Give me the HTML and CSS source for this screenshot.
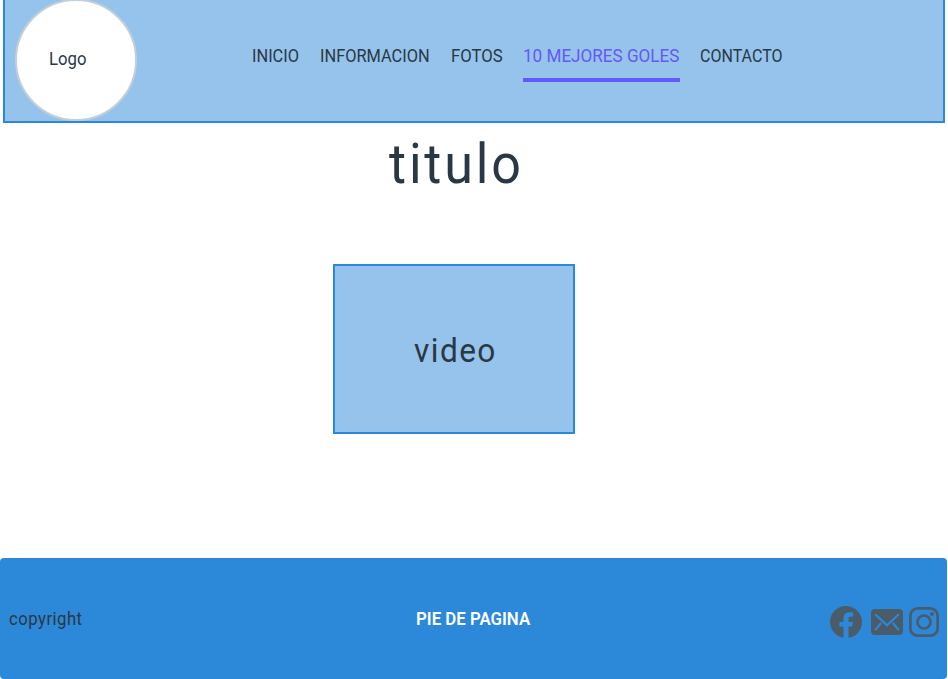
FILE: index.html
```html
<!DOCTYPE html>
<html lang="es">
<head>
<meta charset="utf-8">
<title>10 mejores goles</title>
<link rel="stylesheet" href="styles.css">
</head>
<body>
<header class="header">
  <div class="logo"><span>Logo</span></div>
  <nav class="nav">
    <a class="inicio"><span>INICIO</span></a>
    <a class="informacion"><span>INFORMACION</span></a>
    <a class="fotos"><span>FOTOS</span></a>
    <a class="goles active"><span>10 MEJORES GOLES</span></a>
    <a class="contacto"><span>CONTACTO</span></a>
  </nav>
</header>
<main class="main">
  <h1 class="title">titulo</h1>
  <div class="video"><span>video</span></div>
</main>
<footer class="footer">
  <span class="copyright">copyright</span>
  <strong class="pie">PIE DE PAGINA</strong>
  <div class="social">
    <svg class="facebook" width="32" height="32" viewBox="0 0 32 32"><path fill="currentColor" d="M32 16A16 16 0 1 0 13.5 31.8V20.6H9.4V16h4.1v-3.5c0-4 2.4-6.2 6-6.2 1.800 0 3.600.3 3.600.3v3.900h-2c-2 0-2.600 1.200-2.600 2.500v3h4.400l-.7 4.600h-3.700v11.200A16 16 0 0 0 32 16z"/></svg>
    <svg class="mail" width="32" height="26" viewBox="0 0 32 26"><rect width="32" height="26" rx="4" fill="currentColor"/><path class="mail-lines" d="M4.700 5.700 16 16.300 27.300 5.700M9.700 14.500 4.700 20.500M22.300 14.500l5 6"/></svg>
    <svg class="instagram" width="30" height="30" viewBox="0 0 30 30"><g fill="none" stroke="currentColor" stroke-width="2.700"><rect x="1.350" y="1.350" width="27.300" height="27.300" rx="7.300"/><circle cx="15" cy="15" r="6.500"/></g><circle cx="23" cy="7" r="2" fill="currentColor"/></svg>
  </div>
</footer>
</body>
</html>
```
FILE: styles.css
```css
* { box-sizing: border-box; }
body {
  margin: 0;
  height: 679px;
  display: flex;
  flex-direction: column;
  overflow: hidden;
  background: #fff;
  color: #293845;
  font: 18px/22px Roboto, "Liberation Sans", sans-serif;
}
.header {
  display: flex;
  height: 123px;
  margin: 0 3px;
  padding-left: 10px;
  background: #96c3eb;
  border: 2px solid #2c88d9;
  border-top: 0;
}
.logo {
  width: 122px;
  height: 122px;
  margin-top: -1px;
  padding: 47px 0 0 32px;
  border: 2px solid #c3cfd9;
  border-radius: 50%;
  background: #fff;
}
/* Condensed lettering */
.logo span, .nav span, .copyright, .pie {
  display: inline-block;
  justify-self: start;
  white-space: nowrap;
  transform-origin: 0 0;
}
.logo span { transform: scaleX(.93); }
.nav {
  display: flex;
  gap: 20px;
  margin: 45px 0 0 115px;
}
.nav a { height: 37px; }
.inicio { width: 48px; }
.informacion { width: 111px; }
.fotos { width: 52px; }
.goles { width: 157px; }
.contacto { width: 84px; }
.inicio span { transform: scaleX(.91); }
.informacion span { transform: scaleX(.91); }
.fotos span { transform: scaleX(.93); }
.goles span { transform: scaleX(.95); }
.contacto span { transform: scaleX(.89); }
.active { color: #6558f5; border-bottom: 4px solid #6558f5; }
.main {
  display: flex;
  flex-direction: column;
  align-items: center;
  width: 908px;
  height: 435px;
}
.title {
  margin: 8px 0 0;
  font-size: 56px;
  font-weight: 400;
  line-height: 66px;
  letter-spacing: 3px;
  transform: translateX(2px) scaleX(.93);
}
.video {
  display: flex;
  align-items: center;
  justify-content: center;
  width: 242px;
  height: 170px;
  margin-top: 67px;
  padding-top: 2px;
  background: #96c3eb;
  border: 2px solid #2c88d9;
  font-size: 34px;
  letter-spacing: 1.5px;
}
.video span { transform: translateX(1px) scaleX(.93); }
.footer {
  display: grid;
  grid-template-columns: 407px 1fr auto;
  width: 947px;
  height: 121px;
  padding: 50px 8px 0 9px;
  background: #2c88d9;
  border-radius: 4px;
}
.copyright { letter-spacing: .5px; transform: scaleX(.93); }
.pie { color: #fff; font-weight: 600; transform: scaleX(.935); }
.social { display: flex; align-items: center; height: 28px; color: #4b5c69; }
.mail { margin: 0 6px 0 9px; }
.mail-lines { fill: none; stroke: #2c88d9; stroke-width: 2; stroke-linecap: round; }
```
